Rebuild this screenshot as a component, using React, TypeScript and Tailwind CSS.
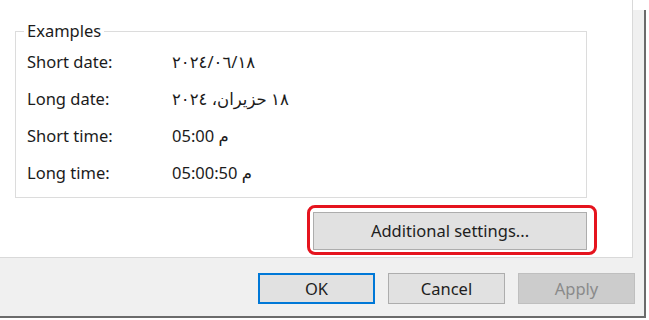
import React from "react";

function Row({ label, children }: { label: string; children: React.ReactNode }) {
  return (
    <div className="flex h-[37px] items-center">
      <div className="w-[145px] shrink-0">{label}</div>
      <div dir="ltr">{children}</div>
    </div>
  );
}

export default function App() {
  return (
    <div className="relative h-[320px] w-[649px] overflow-hidden bg-white text-[16.5px] leading-[20px] text-[#1b1b1b] font-['Noto_Sans','DejaVu_Sans',sans-serif]">
      <div className="flex h-[316px] w-[646px]">
        {/* main column */}
        <div className="flex w-[644px] flex-col bg-[#f0f0f0]">
          <div className="flex h-[258px]">
            {/* white tab panel */}
            <div className="flex h-full w-[633px] flex-col border-b border-r border-[#d9d9d9] bg-white pl-[15px] pt-[21px]">
              <fieldset className="w-[572px] border border-[#dcdcdc] px-[11px] pb-[6px] pt-[2px]">
                <legend className="-ml-[3px] px-[3px] leading-[20px]">Examples</legend>
                <Row label="Short date:">٢٠٢٤/٠٦/١٨</Row>
                <Row label="Long date:">١٨ حزيران، ٢٠٢٤</Row>
                <Row label="Short time:">05:00 م</Row>
                <Row label="Long time:">05:00:50 م</Row>
              </fieldset>
              <div className="mt-[7px] flex justify-end pr-[35px]">
                <div className="rounded-[8px] border-[3px] border-[#e5141e] pb-[2px] pl-[3px] pr-[7px] pt-[4px]">
                  <div className="flex h-[38px] w-[274px] items-center justify-center border border-[#adadad] bg-[#e1e1e1] text-[#1e1e1e]">
                    Additional settings...
                  </div>
                </div>
              </div>
            </div>
            {/* right strip */}
            <div className="flex flex-1 flex-col">
              <div className="h-[10px] bg-white" />
              <div className="flex-1 bg-[#f0f0f0]" />
            </div>
          </div>
          {/* bottom buttons */}
          <div className="flex flex-1 items-start justify-end gap-[13px] pr-[9px] pt-[15px]">
            <div className="flex h-[31px] w-[117px] items-center justify-center border-2 border-[#0078d7] bg-[#e1e1e1] text-[#1e1e1e]">
              OK
            </div>
            <div className="flex h-[31px] w-[117px] items-center justify-center border border-[#adadad] bg-[#e1e1e1] text-[#1e1e1e]">
              Cancel
            </div>
            <div className="flex h-[31px] w-[117px] items-center justify-center border border-[#bfbfbf] bg-[#cccccc] text-[#8a8a8a]">
              Apply
            </div>
          </div>
        </div>
        {/* right dark edge */}
        <div className="flex w-[2px] flex-col">
          <div className="h-[10px] bg-white" />
          <div className="flex-1 bg-[#6b6b6b]" />
        </div>
      </div>
      <div className="h-[2px] w-[646px] bg-[#6b6b6b]" />
    </div>
  );
}
